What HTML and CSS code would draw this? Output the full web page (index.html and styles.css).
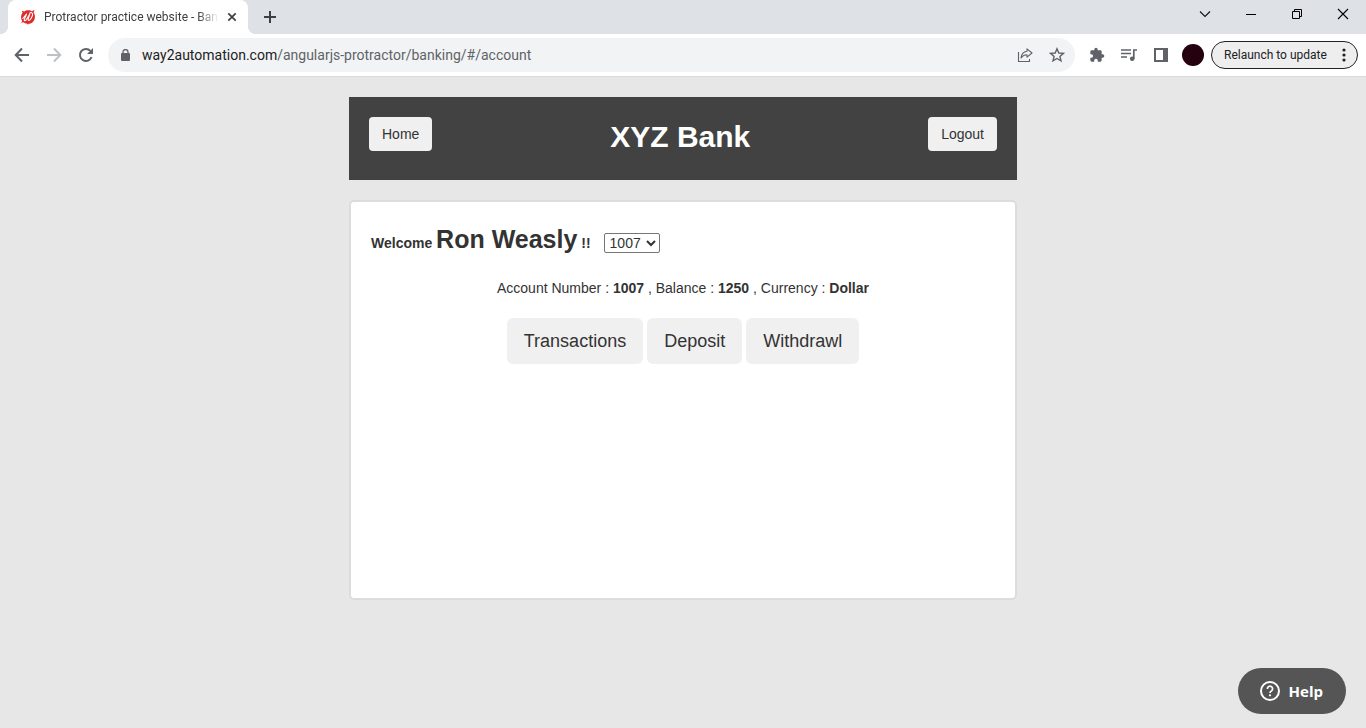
FILE: index.html
```html
<!DOCTYPE html>
<html lang="en">
<head>
<meta charset="utf-8">
<title>Protractor practice website - Banking App</title>
<link rel="stylesheet" href="styles.css">
</head>
<body>
<header class="browser">
  <div class="tabstrip">
    <div class="tab">
      <svg class="favicon" width="16" height="16" viewBox="0 0 16 16"><path d="M8 1.200C9.800 1 11 1.600 12 2.200L14.500 .8L13.600 3.800C14.600 5 15 6.500 14.900 8.200C14.800 10.500 13.800 12.300 12.200 13.400C10.800 14.400 9.700 14.700 8.600 14.800L8 15.800L7.300 14.800C5.500 14.700 4.300 14.200 3.300 13.300L1.400 13.800L2.100 11.700C1.200 10.400 1 9 1.100 7.500C1.200 6 1.700 4.800 2.500 3.800L1.800 1.800L4.300 2.400C5.500 1.600 6.500 1.300 8 1.200Z" fill="#e02b2b"/><path d="M2.800 9.500L6.500 5L4.300 10.500C4 12.500 5.500 12 6.600 10.200L9.800 5L8.200 9.800C7.800 12 9.600 11.800 11 9.500C12.300 7.500 13 5.500 12.200 4.200C11.600 3.300 10.500 3.400 9.800 4" fill="none" stroke="#fff" stroke-width="1.100" stroke-linecap="round" stroke-linejoin="round"/></svg>
      <span class="tab-title">Protractor practice website - Ban</span>
      <button class="tab-close" aria-label="Close tab"><svg width="10" height="10" viewBox="0 0 10 10"><path d="M1.300 1.300L8.700 8.700M8.700 1.300L1.300 8.700" stroke="#3c4043" stroke-width="1.700"/></svg></button>
    </div>
    <button class="new-tab" aria-label="New tab"><svg width="14" height="14" viewBox="0 0 14 14"><path d="M7 1V13M1 7H13" stroke="#3c4043" stroke-width="2"/></svg></button>
    <div class="window-controls">
      <button aria-label="Search tabs"><svg width="12" height="12" viewBox="0 0 12 12"><path d="M1 3.500L6 8.500L11 3.500" fill="none" stroke="#111" stroke-width="1.100"/></svg></button>
      <button aria-label="Minimize"><svg width="10" height="10" viewBox="0 0 10 10"><path d="M0 5.500H10" stroke="#000"/></svg></button>
      <button aria-label="Restore"><svg width="10" height="10" viewBox="0 0 10 10"><path d="M.5 2.500H7.500V9.500H.5ZM2.500 2.500V.5H9.500V7.500H7.500" fill="none" stroke="#000"/></svg></button>
      <button aria-label="Close"><svg width="12" height="12" viewBox="0 0 12 12"><path d="M1 1L11 11M11 1L1 11" stroke="#000" stroke-width="1.100"/></svg></button>
    </div>
  </div>
  <div class="toolbar">
    <div class="nav">
      <button aria-label="Back"><svg width="16" height="16" viewBox="0 0 16 16"><path d="M15 8H2.500M8 1.500L1.700 8L8 14.500" fill="none" stroke="#5f6368" stroke-width="2"/></svg></button>
      <button aria-label="Forward"><svg width="16" height="16" viewBox="0 0 16 16"><path d="M1 8H13.500M8 1.500L14.300 8L8 14.500" fill="none" stroke="#bdc1c6" stroke-width="2"/></svg></button>
      <button aria-label="Reload"><svg width="16" height="16" viewBox="0 0 16 16"><path d="M13.600 10A6 6 0 1 1 12.400 3.900" fill="none" stroke="#5f6368" stroke-width="2"/><path d="M15 1V7H9Z" fill="#5f6368"/></svg></button>
    </div>
    <div class="address">
      <svg width="10" height="12" viewBox="0 0 10 12"><rect x="1" y="4" width="9" height="8" rx="1" fill="#5f6368"/><path d="M3 4.500V3A2.500 2.500 0 0 1 8 3V4.500" fill="none" stroke="#5f6368" stroke-width="1.300"/></svg>
      <span class="url"><span class="host">way2automation.com</span>/angularjs-protractor/banking/#/account</span>
      <button aria-label="Share"><svg width="16" height="16" viewBox="0 0 16 16"><path d="M1.500 5V14.500H12.500V12" fill="none" stroke="#5f6368" stroke-width="1.100"/><path d="M10 1.800L15 6L10 10.200V7.800C7.300 7.800 5.500 8.800 4 11C4.300 7.300 6.500 4.700 10 4.200Z" fill="none" stroke="#5f6368" stroke-width="1.100" stroke-linejoin="round"/></svg></button>
      <button aria-label="Bookmark"><svg width="16" height="16" viewBox="0 0 16 16"><path d="M8 1.800L9.800 6L14.400 6.400L10.900 9.400L12 13.900L8 11.500L4 13.900L5.100 9.400L1.600 6.400L6.200 6Z" fill="none" stroke="#5f6368" stroke-width="1.400"/></svg></button>
    </div>
    <div class="extensions">
      <button aria-label="Extensions"><svg width="16" height="16" viewBox="0 0 24 24"><path fill="#5f6368" d="M20.500 11H19V7a2 2 0 0 0-2-2h-4V3.500a2.500 2.500 0 0 0-5 0V5H4a2 2 0 0 0-2 2v3.800h1.500a2.700 2.700 0 0 1 0 5.400H2V20a2 2 0 0 0 2 2h3.800v-1.500a2.700 2.700 0 0 1 5.400 0V22H17a2 2 0 0 0 2-2v-4h1.500a2.500 2.500 0 0 0 0-5z"/></svg></button>
      <button aria-label="Media controls"><svg width="16" height="14" viewBox="0 0 16 14"><path d="M0 2H10M0 5.500H10M0 9H6" stroke="#5f6368" stroke-width="1.600"/><path d="M12.800 11V2H16" fill="none" stroke="#5f6368" stroke-width="1.700"/><circle cx="11.200" cy="10.800" r="2.300" fill="#5f6368"/></svg></button>
      <button aria-label="Side panel"><svg width="14" height="14" viewBox="0 0 14 14"><path fill="#5f6368" fill-rule="evenodd" d="M0 0H14V14H0ZM2 2V12H9V2Z"/></svg></button>
      <button class="profile" aria-label="Profile"><span class="avatar"></span></button>
    </div>
    <button class="relaunch">Relaunch to update<svg width="4" height="14" viewBox="0 0 4 14" fill="#202124"><circle cx="2" cy="2" r="1.600"/><circle cx="2" cy="7" r="1.600"/><circle cx="2" cy="12" r="1.600"/></svg></button>
  </div>
</header>
<main class="page">
  <div class="bank-header">
    <button class="btn">Home</button>
    <strong class="bank-name">XYZ Bank</strong>
    <button class="btn">Logout</button>
  </div>
  <section class="panel">
    <div class="welcome">
      <strong>Welcome <span class="customer">Ron Weasly</span> !!</strong>
      <select class="account-select" aria-label="Account"><option>1007</option></select>
    </div>
    <p class="summary">Account Number : <strong>1007</strong> , Balance : <strong>1250</strong> , Currency : <strong>Dollar</strong></p>
    <div class="actions">
      <button class="btn btn-large">Transactions</button>
      <button class="btn btn-large">Deposit</button>
      <button class="btn btn-large">Withdrawl</button>
    </div>
  </section>
</main>
<button class="help"><svg width="20" height="20" viewBox="0 0 20 20"><circle cx="10" cy="10" r="9" fill="none" stroke="#fff" stroke-width="2"/><path d="M7.400 8A2.600 2.600 0 1 1 11.500 9.900C10.400 10.600 10 11 10 12" fill="none" stroke="#fff" stroke-width="1.700"/><circle cx="10" cy="14.300" r="1.100" fill="#fff"/></svg>Help</button>
</body>
</html>
```
FILE: styles.css
```css
* { box-sizing: border-box; }
body {
  margin: 0;
  min-height: 100vh;
  background: #e7e7e7;
  color: #333;
  font: 14px/20px "Liberation Sans", Arial, sans-serif;
}
button { margin: 0; padding: 0; border: 0; background: none; color: inherit; font: inherit; }
svg { display: block; flex: none; }

.browser { font-family: Roboto, "Open Sans", sans-serif; background: #fff; border-bottom: 1px solid #d9dadc; }
.browser button { display: flex; align-items: center; justify-content: center; }
.tabstrip { display: flex; height: 34px; padding-left: 8px; background: #dee1e6; }
.tab {
  position: relative;
  display: flex;
  align-items: center;
  width: 240px;
  padding: 0 11px 0 12px;
  border-radius: 8px 8px 0 0;
  background: #fff;
}
.tab::before, .tab::after { content: ""; position: absolute; bottom: 0; width: 8px; height: 8px; }
.tab::before { right: 100%; background: radial-gradient(circle at 0 0, #dee1e6 8px, #fff 8px); }
.tab::after { left: 100%; background: radial-gradient(circle at 100% 0, #dee1e6 8px, #fff 8px); }
.tab-title {
  flex: 1;
  margin: 0 8px;
  white-space: nowrap;
  color: #3c4043;
  font-size: 12px;
  mask-image: linear-gradient(to right, #000 88%, transparent);
}
.new-tab { width: 44px; }
.window-controls { display: flex; height: 28px; margin-left: auto; }
.window-controls button { width: 46px; }

.toolbar { display: flex; align-items: center; height: 42px; padding: 0 8px 0 6px; }
.nav { display: flex; margin-right: 6px; }
.nav button, .extensions button, .address button { width: 32px; height: 32px; }
.address {
  display: flex;
  flex: 1;
  align-items: center;
  height: 34px;
  padding: 0 2px 0 12px;
  border-radius: 17px;
  background: #f1f3f4;
}
.url { flex: 1; margin-left: 12px; color: #5f6368; font-size: 14px; }
.host { color: #202124; }
.extensions { display: flex; margin: 0 2px 0 6px; }
.avatar { width: 22px; height: 22px; border-radius: 50%; background: #25000f; }
.browser .relaunch {
  justify-content: space-between;
  width: 147px;
  height: 28px;
  padding: 0 11px 0 12px;
  border: 1px solid #202124;
  border-radius: 14px;
  background: #eee;
  color: #202124;
  font-size: 12px;
  white-space: nowrap;
}

.page { max-width: 668px; margin: 20px auto; }
.bank-header {
  display: flex;
  align-items: flex-start;
  justify-content: space-between;
  min-height: 83px;
  padding: 20px;
  background: #424242;
}
.bank-name { color: #fff; font-size: 30px; line-height: 40px; }
.btn { padding: 7px 13px; border-radius: 4px; background: #f0f0f0; color: #333; }
.panel {
  min-height: 400px;
  margin-top: 20px;
  padding: 20px;
  border: 2px solid #dcdcdc;
  border-radius: 5px;
  background: #fff;
}
.welcome { display: flex; align-items: baseline; gap: 13px; line-height: 34px; }
.customer { font-size: 25px; }
.account-select {
  height: 20px;
  padding: 0 1px;
  border: 1px solid #767676;
  border-radius: 2px;
  background: #fff;
  color: #333;
  font: inherit;
  line-height: 18px;
}
.summary { margin: 18px 0 20px; text-align: center; }
.actions { display: flex; justify-content: center; gap: 4px; }
.btn-large { padding: 10px 17px; border-radius: 6px; font-size: 18px; line-height: 26px; }
.help {
  position: fixed;
  right: 20px;
  bottom: 14px;
  display: flex;
  align-items: center;
  gap: 9px;
  height: 46px;
  padding: 0 23px 0 22px;
  border-radius: 23px;
  background: #555;
  color: #fff;
  font: bold 15px/20px "Open Sans", "Noto Sans", sans-serif;
}
```
